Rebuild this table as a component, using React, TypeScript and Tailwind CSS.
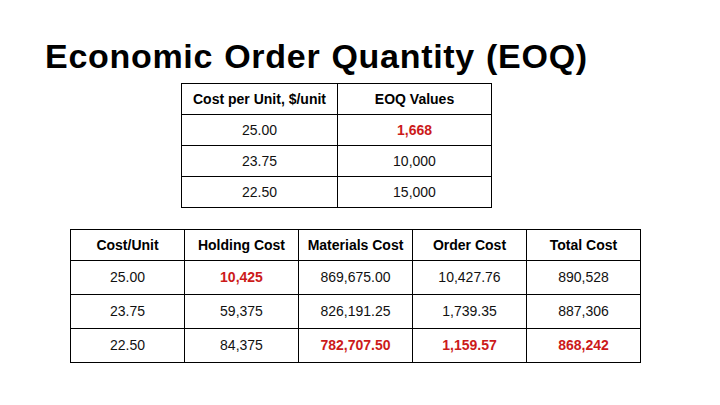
const top = [
  { cost: "25.00", eoq: "1,668", red: true },
  { cost: "23.75", eoq: "10,000" },
  { cost: "22.50", eoq: "15,000" },
];

const head = ["Cost/Unit", "Holding Cost", "Materials Cost", "Order Cost", "Total Cost"];

const rows = [
  [
    { v: "25.00" },
    { v: "10,425", red: true },
    { v: "869,675.00" },
    { v: "10,427.76" },
    { v: "890,528" },
  ],
  [{ v: "23.75" }, { v: "59,375" }, { v: "826,191.25" }, { v: "1,739.35" }, { v: "887,306" }],
  [
    { v: "22.50" },
    { v: "84,375" },
    { v: "782,707.50", red: true },
    { v: "1,159.57", red: true },
    { v: "868,242", red: true },
  ],
];

function Cell({ v, red }: { v: string; red?: boolean }) {
  return (
    <td
      className={
        "border border-black text-center " +
        (red ? "font-bold text-[#cc1a1a]" : "text-[#111]")
      }
    >
      {v}
    </td>
  );
}

export default function App() {
  return (
    <div className="w-[720px] h-[405px] bg-white overflow-hidden font-['Liberation_Sans',Arial,sans-serif] text-[14px] text-black">
      <h1 className="pl-[45px] pt-[36px] text-[34px] leading-[40px] font-bold tracking-[0.7px] [word-spacing:1px]">
        Economic Order Quantity (EOQ)
      </h1>

      <table className="ml-[181px] mt-[7px] border-collapse">
        <thead>
          <tr className="h-[31px]">
            <th className="w-[156px] border border-black font-bold">Cost per Unit, $/unit</th>
            <th className="w-[154px] border border-black font-bold">EOQ Values</th>
          </tr>
        </thead>
        <tbody>
          {top.map((r) => (
            <tr key={r.cost} className="h-[31px]">
              <Cell v={r.cost} />
              <Cell v={r.eoq} red={r.red} />
            </tr>
          ))}
        </tbody>
      </table>

      <table className="ml-[70px] mt-[21px] border-collapse">
        <thead>
          <tr className="h-[31px]">
            {head.map((h) => (
              <th key={h} className="w-[114px] border border-black font-bold">
                {h}
              </th>
            ))}
          </tr>
        </thead>
        <tbody>
          {rows.map((r, i) => (
            <tr key={i} className="h-[34px]">
              {r.map((c, j) => (
                <Cell key={j} v={c.v} red={c.red} />
              ))}
            </tr>
          ))}
        </tbody>
      </table>
    </div>
  );
}
